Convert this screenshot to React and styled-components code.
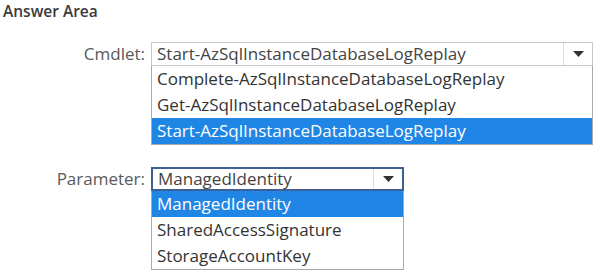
import styled, { createGlobalStyle } from "styled-components"

const GlobalStyle = createGlobalStyle`
    body {
        margin: 0;
        background: #ffffff;
        font-family: "Open Sans", "Noto Sans", sans-serif;
    }
`

const fields = [
    {
        label: "Cmdlet:",
        value: "Start-AzSqlInstanceDatabaseLogReplay",
        width: 442,
        focused: false,
        options: [
            "Complete-AzSqlInstanceDatabaseLogReplay",
            "Get-AzSqlInstanceDatabaseLogReplay",
            "Start-AzSqlInstanceDatabaseLogReplay",
        ],
        selected: 2,
    },
    {
        label: "Parameter:",
        value: "ManagedIdentity",
        width: 253,
        focused: true,
        options: ["ManagedIdentity", "SharedAccessSignature", "StorageAccountKey"],
        selected: 0,
    },
]

export default function App() {
    return (
        <Page>
            <GlobalStyle />
            <Heading>Answer Area</Heading>
            <Fields>
                {fields.map((field) => (
                    <FieldRow key={field.label}>
                        <Label>{field.label}</Label>
                        <Dropdown $width={field.width}>
                            <SelectBox $focused={field.focused}>
                                <SelectValue>{field.value}</SelectValue>
                                <ArrowCell>
                                    <svg width="11" height="6" viewBox="0 0 11 6">
                                        <path d="M0 0 H11 L5.5 6 Z" fill="#333" />
                                    </svg>
                                </ArrowCell>
                            </SelectBox>
                            <OptionList>
                                {field.options.map((option, i) => (
                                    <Option key={option} $active={i === field.selected}>
                                        {option}
                                    </Option>
                                ))}
                            </OptionList>
                        </Dropdown>
                    </FieldRow>
                ))}
            </Fields>
        </Page>
    )
}

const Page = styled.div`
    width: 597px;
    height: 275px;
    padding: 1px 0 0 3px;
    box-sizing: border-box;
    overflow: hidden;
`

const Heading = styled.h2`
    margin: 0;
    font-size: 15.5px;
    font-weight: 600;
    line-height: 20px;
    color: #3a3a3a;
`

const Fields = styled.div`
    display: flex;
    flex-direction: column;
    gap: 22px;
    margin-top: 21px;
`

const FieldRow = styled.div`
    display: flex;
    align-items: flex-start;
    gap: 6px;
`

const Label = styled.div`
    width: 142px;
    text-align: right;
    font-size: 17px;
    line-height: 24px;
    color: #5a5a5a;
`

const Dropdown = styled.div`
    width: ${(p) => p.$width}px;
    display: flex;
    flex-direction: column;
`

const SelectBox = styled.div`
    height: 24px;
    display: flex;
    align-items: stretch;
    border-style: solid;
    border-color: ${(p) => (p.$focused ? "#3d5f93" : "#c8c8c8")};
    border-width: ${(p) => (p.$focused ? "2px" : "1px")};
    box-sizing: border-box;
    background: #ffffff;
`

const SelectValue = styled.div`
    flex: 1;
    display: flex;
    align-items: center;
    padding-left: 5px;
    font-size: 17px;
    line-height: 20px;
    color: #444444;
    white-space: nowrap;
`

const ArrowCell = styled.div`
    width: 28px;
    border-left: 1px solid #dddddd;
    display: flex;
    align-items: center;
    justify-content: center;
`

const OptionList = styled.div`
    border: 1px solid #a9a9a9;
    border-top: none;
    display: flex;
    flex-direction: column;
    background: #ffffff;
`

const Option = styled.div`
    height: 26px;
    padding-left: 5px;
    font-size: 17px;
    line-height: 26px;
    white-space: nowrap;
    color: ${(p) => (p.$active ? "#ffffff" : "#333333")};
    background: ${(p) => (p.$active ? "#1f86e6" : "transparent")};
`
